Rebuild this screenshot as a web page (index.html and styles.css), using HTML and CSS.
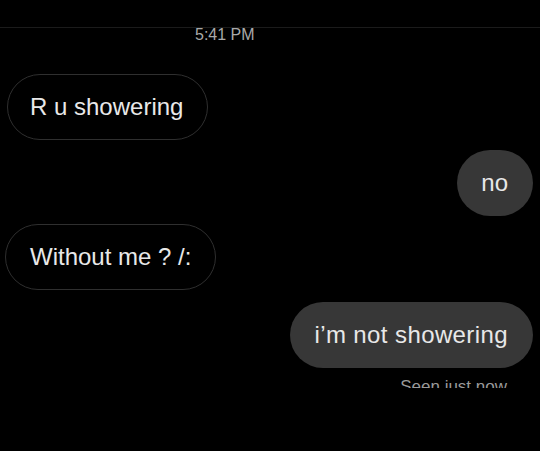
FILE: index.html
```html
<!DOCTYPE html>
<html lang="en">
<head>
    <meta charset="UTF-8">
    <meta name="viewport" content="width=device-width, initial-scale=1.0">
    <title>Messages</title>
    <link rel="stylesheet" href="styles.css">
</head>
<body>

<div class="chat">
    <!-- hora da conversa -->
    <div class="time-row">
        <span class="time">5:41 PM</span>
    </div>

    <div class="row theirs first">
        <div class="bubble outline">R u showering</div>
    </div>

    <div class="row mine">
        <div class="bubble filled">no</div>
    </div>

    <div class="row theirs second">
        <div class="bubble outline">Without me ? /:</div>
    </div>

    <div class="row mine last">
        <div class="bubble filled wide">i’m not showering</div>
    </div>

    <div class="seen-row">
        <span class="seen">Seen just now</span>
    </div>
</div>

</body>
</html>
```

FILE: styles.css
```css
body {
    font-family: "Liberation Sans", Arial, sans-serif;
    background-color: #000;
    margin: 0;
    padding: 0;
    width: 540px;
    height: 451px;
    overflow: hidden;
}

.chat {
    padding-top: 27px;
}

.time-row {
    border-top: 1px solid #1b1b1b;
    padding-left: 195px;
    margin-bottom: -2px;
}

.time {
    display: block;
    margin-top: -1px;
    font-size: 16px;
    line-height: 16px;
    color: #a9a9a9;
}

.row {
    display: flex;
    padding: 0 7px;
}

.row.theirs {
    justify-content: flex-start;
}

.row.first {
    margin-top: 33px;
}

.row.second {
    margin-top: 8px;
    padding-left: 5px;
}

.row.mine {
    justify-content: flex-end;
    margin-top: 10px;
}

.row.mine.last {
    margin-top: 12px;
}

.bubble {
    box-sizing: border-box;
    height: 66px;
    display: flex;
    align-items: center;
    font-size: 24px;
    color: #e8e8e8;
    border-radius: 33px;
    white-space: nowrap;
}

.bubble.outline {
    border: 1.5px solid #2f2f2f;
    padding: 0 24px 0 22px;
}

.row.second .bubble {
    padding-left: 24px;
}

.bubble.filled {
    background-color: #373737;
    padding: 0 25px 0 24px;
}

.bubble.wide {
    letter-spacing: 0.4px;
}

.seen-row {
    display: flex;
    justify-content: flex-end;
    padding-right: 33px;
    margin-top: 9px;
    height: 11px;
    overflow: hidden;
}

.seen {
    font-size: 17px;
    color: #9a9a9a;
}
```
